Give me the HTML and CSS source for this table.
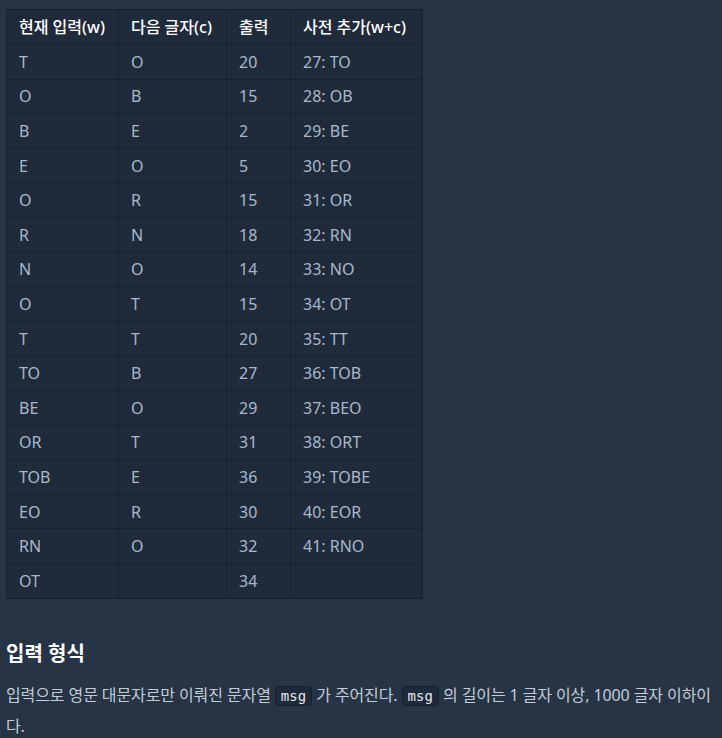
FILE: index.html
```html
<!DOCTYPE html>
<html lang="ko">
<head>
<meta charset="utf-8">
<link rel="stylesheet" href="styles.css">
</head>
<body>
<div class="page">
<table class="lzw">
<thead>
<tr><th class="c1">현재 입력(w)</th><th class="c2">다음 글자(c)</th><th class="c3">출력</th><th class="c4">사전 추가(w+c)</th></tr>
</thead>
<tbody>
<tr><td>T</td><td>O</td><td>20</td><td>27: TO</td></tr>
<tr><td>O</td><td>B</td><td>15</td><td>28: OB</td></tr>
<tr><td>B</td><td>E</td><td>2</td><td>29: BE</td></tr>
<tr><td>E</td><td>O</td><td>5</td><td>30: EO</td></tr>
<tr><td>O</td><td>R</td><td>15</td><td>31: OR</td></tr>
<tr><td>R</td><td>N</td><td>18</td><td>32: RN</td></tr>
<tr><td>N</td><td>O</td><td>14</td><td>33: NO</td></tr>
<tr><td>O</td><td>T</td><td>15</td><td>34: OT</td></tr>
<tr><td>T</td><td>T</td><td>20</td><td>35: TT</td></tr>
<tr><td>TO</td><td>B</td><td>27</td><td>36: TOB</td></tr>
<tr><td>BE</td><td>O</td><td>29</td><td>37: BEO</td></tr>
<tr><td>OR</td><td>T</td><td>31</td><td>38: ORT</td></tr>
<tr><td>TOB</td><td>E</td><td>36</td><td>39: TOBE</td></tr>
<tr><td>EO</td><td>R</td><td>30</td><td>40: EOR</td></tr>
<tr><td>RN</td><td>O</td><td>32</td><td>41: RNO</td></tr>
<tr><td>OT</td><td></td><td>34</td><td></td></tr>
</tbody>
</table>
<h5 class="section-title">입력 형식</h5>
<p class="desc">입력으로 영문 대문자로만 이뤄진 문자열 <code>msg</code> 가 주어진다. <code>msg</code> 의 길이는 1 글자 이상, 1000 글자 이하이다.</p>
</div>
</body>
</html>
```
FILE: styles.css
```css
html, body {
  margin: 0;
  padding: 0;
  background: #263445;
}
.page {
  padding: 9px 0 0 6px;
  font-family: "Noto Sans", "Noto Sans CJK KR", sans-serif;
  color: #c3ccd7;
}
.lzw {
  border-collapse: collapse;
  background: #1f2a3b;
  font-size: 16px;
}
.lzw th, .lzw td {
  border: 1px solid #172131;
  text-align: left;
  padding: 0 12px;
  height: 33.6px;
  line-height: 20px;
  white-space: nowrap;
}
.lzw th {
  color: #ffffff;
  font-weight: 500;
  height: 34px;
}
.lzw td {
  color: #a9b9cb;
}
.c1 { width: 87px; }
.c2 { width: 83px; }
.c3 { width: 39px; }
.c4 { width: 107px; }
.section-title {
  margin: 41px 0 0 0;
  font-size: 20px;
  font-weight: 700;
  color: #ffffff;
  line-height: 28px;
}
.desc {
  margin: 12px 6px 0 0;
  font-size: 16px;
  line-height: 30px;
  letter-spacing: -0.1px;
  color: #c3ccd7;
}
code {
  font-family: "DejaVu Sans Mono", "Liberation Mono", monospace;
  font-size: 14px;
  letter-spacing: 0;
  background: #1e293b;
  border: 1px solid #17202d;
  border-radius: 4px;
  padding: 1px 5px;
  color: #e6e8ea;
}
```
